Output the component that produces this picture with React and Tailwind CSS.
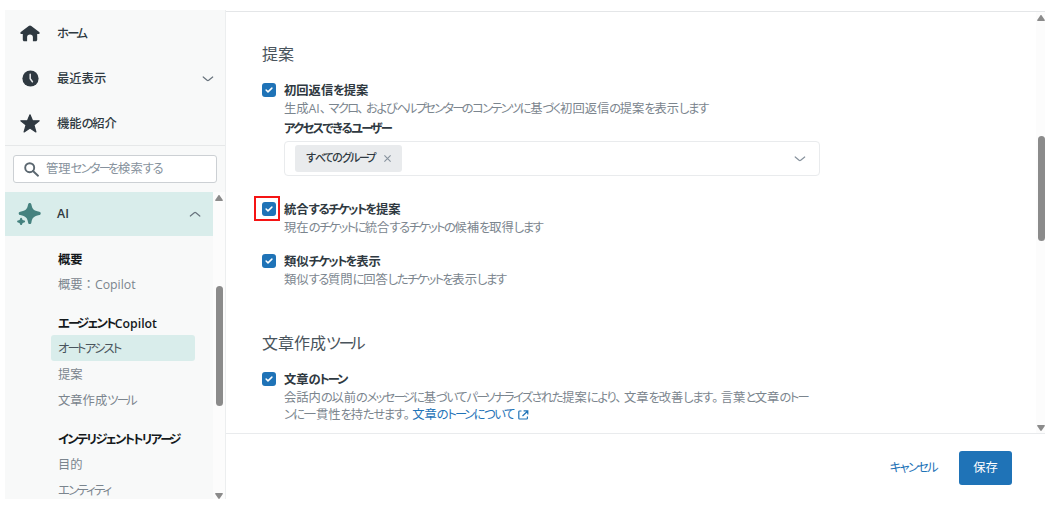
import clsx from 'clsx';

const NAV_GROUPS = [
  { title: '概要', items: [{ label: '概要：Copilot' }] },
  {
    title: 'エージェントCopilot',
    items: [{ label: 'オートアシスト', active: true }, { label: '提案' }, { label: '文章作成ツール' }],
  },
  { title: 'インテリジェントトリアージ', items: [{ label: '目的' }, { label: 'エンティティ' }] },
];

const RUNS = /[ーヘプべ]+|[ァ-ヶ]+?(?=[ーヘプべ]|[^ァ-ヶ]|$)|[ぁ-ん]+?(?=[べ]|[^ぁ-ん]|$)|[、。]|：|[^ァ-ヶーぁ-ん、。：]+/g;

const runClass = (run) => {
  if (/[ーヘプべ]/.test(run)) return 'tracking-[-0.24em]';
  if (/[ァ-ヶ]/.test(run)) return 'tracking-[-0.137em]';
  if (/[ぁ-ん]/.test(run)) return 'tracking-[-0.11em]';
  if (/[、。]/.test(run)) return 'tracking-[0.2em]';
  if (run === '：') return "[font-feature-settings:'palt'_0]";
  return '';
};

const Jp = ({ children }) => (
  <span>
    {children.match(RUNS).map((run, i) => {
      const cls = runClass(run);
      return cls ? <span key={i} className={cls}>{run}</span> : run;
    })}
  </span>
);

const HomeIcon = () => (
  <svg width="20" height="17" viewBox="0 0 20 17" fill="#2f3941">
    <path d="M10 .4c.5 0 .9.2 1.300.5l7.900 6.200c.9.8.4 2-.7 2h-1.300v5.600c0 .9-.6 1.500-1.500 1.500h-2.800v-4c0-1.500-1.100-2.600-2.900-2.600s-2.900 1.100-2.900 2.600v4H4.300c-.9 0-1.500-.6-1.500-1.500V9.100H1.500c-1.100 0-1.600-1.200-.7-2L8.700.9c.4-.3.8-.5 1.300-.5z" />
  </svg>
);

const ClockIcon = () => (
  <svg width="17" height="17" viewBox="0 0 17 17">
    <circle cx="8.500" cy="8.500" r="8.100" fill="#2f3941" />
    <path d="M8.200 4.200v4.600l2.200 3" fill="none" stroke="#e9ebed" strokeWidth="1.500" strokeLinecap="round" />
  </svg>
);

const StarIcon = () => (
  <svg width="20" height="19" viewBox="0 0 20 19" fill="#2f3941" stroke="#2f3941" strokeWidth="1.200" strokeLinejoin="round">
    <path d="M10 .8l2.500 6h6.700l-5.300 4.200 2 6.900L10 14.100l-5.900 3.800 2-6.900L.8 6.800h6.700z" />
  </svg>
);

const SparkleIcon = () => (
  <svg width="24" height="22" viewBox="0 0 24 22" fill="#45827f">
    <path d="M12.700 0c1 0 1.500.6 1.700 1.500.9 4.600 2.200 6.100 7.900 7.300.9.200 1.400.7 1.400 1.600s-.5 1.400-1.400 1.600c-5.700 1.200-7 2.700-7.900 7.400-.2 1-.7 1.500-1.700 1.500s-1.400-.5-1.600-1.500C10.200 14.700 8.900 13.200 3.200 12c-.9-.2-1.500-.7-1.500-1.600s.6-1.400 1.500-1.600c5.700-1.200 7-2.700 7.900-7.300.2-.9.600-1.500 1.600-1.500z" />
    <path d="M4.100 14.800c.6 0 .8.300.9.800.3 1.300.6 1.700 2.300 2 .5.100.8.400.8.900s-.3.800-.8.900c-1.700.3-2 .7-2.300 2-.1.400-.3.600-.9.600s-.8-.2-.9-.6c-.3-1.300-.6-1.700-2.300-2-.5-.1-.8-.4-.8-.9s.3-.8.800-.9c1.700-.3 2-.7 2.300-2 .1-.5.300-.8.900-.8z" />
  </svg>
);

const SearchIcon = () => (
  <svg width="15" height="15" viewBox="0 0 15 15" fill="none" stroke="#5b6770" strokeWidth="1.900">
    <circle cx="5.700" cy="5.700" r="4.500" />
    <path d="M9 9l5 4.700" strokeLinecap="round" />
  </svg>
);

const Chevron = ({ up, color = '#68737d' }) => (
  <svg width="12" height="6" viewBox="0 0 12 6" fill="none" stroke={color} strokeWidth="1.200" strokeLinecap="round" className={up ? 'rotate-180' : ''}>
    <path d="M1.200 1l3.900 3.200c.5.400 1.100.4 1.600 0L10.700 1" />
  </svg>
);

const ExternalIcon = () => (
  <svg width="11" height="10" viewBox="0 0 11 10" fill="none" stroke="#1f73b7" strokeWidth="1.200" className="ml-1">
    <path d="M3.500 1H1.600C1.100 1 .8 1.300.8 1.800v6.400c0 .5.300.8.800.8h7c.5 0 .8-.3.800-.8V6.500M5.600.9h4.200v3.600M9.500 1.200L4.500 6" />
  </svg>
);

const Arrow = ({ down }) => (
  <svg width="8" height="6" viewBox="0 0 8 6" fill="#8b8b8b" className={down ? 'rotate-180' : ''}>
    <path d="M3.300.5c.4-.6 1-.6 1.400 0L7.800 5c.2.500 0 .9-.5.900H.7C.2 5.900 0 5.500.2 5z" />
  </svg>
);

const Checkbox = ({ highlighted }) => (
  <span className="relative mt-px flex size-[14px] shrink-0 items-center justify-center rounded-[3px] bg-[#1f73b7]">
    <svg width="8" height="6" viewBox="0 0 8 6" fill="none" stroke="white" strokeWidth="1.500" strokeLinecap="round" strokeLinejoin="round">
      <path d="M1.100 3l1.900 1.900L6.900 1.100" />
    </svg>
    {highlighted && <span className="absolute -left-[8px] -top-[6px] h-[25px] w-[26px] border-2 border-[#f51414]" />}
  </span>
);

const TopLink = ({ icon, label, chevron }) => (
  <div className="flex h-[45px] items-center pl-[15px] pr-[11px]">
    <span className="flex w-5 justify-center">{icon}</span>
    <span className="ml-[17px] flex-1 pt-px font-medium text-[#2f3941]"><Jp>{label}</Jp></span>
    {chevron && <Chevron />}
  </div>
);

const Option = ({ label, highlighted, children }) => (
  <div className="flex gap-2">
    <Checkbox highlighted={highlighted} />
    <div className="flex-1">
      <div className="h-[18px] leading-[17px] font-semibold text-[#2f3941]"><Jp>{label}</Jp></div>
      {children}
    </div>
  </div>
);

const Desc = ({ children }) => (
  <div className="flex h-[17px] items-center leading-[17px] text-[#7b858e]">{children}</div>
);

const Sidebar = () => (
  <aside className="flex w-[221px] shrink-0 flex-col border-r border-[#eceeef] bg-[#f8f9f9]">
    <div className="h-[136px] border-b border-[#e6e8e9] pt-px">
      <TopLink icon={<HomeIcon />} label="ホーム" />
      <TopLink icon={<ClockIcon />} label="最近表示" chevron />
      <TopLink icon={<StarIcon />} label="機能の紹介" />
    </div>
    <div className="mx-2 mt-[9px] flex h-[28px] w-[204px] items-center rounded-[3px] border border-[#ccd0d4] bg-white pl-[10px]">
      <SearchIcon />
      <span className="ml-[7px] pt-px text-[#87929d]"><Jp>管理センターを検索する</Jp></span>
    </div>
    <div className="mt-[9px] flex min-h-0 flex-1">
      <div className="w-[208px]">
        <div className="flex h-11 items-center bg-[#d9edeb] pl-[12px] pr-3">
          <SparkleIcon />
          <span className="ml-[16px] flex-1 pt-px font-semibold text-[#2f3941]">AI</span>
          <Chevron up />
        </div>
        <div className="flex flex-col gap-[13px] pl-[46px] pt-[10px]">
          {NAV_GROUPS.map((group) => (
            <div key={group.title}>
              <div className="h-[25px] pl-[7px] leading-[28px] font-semibold text-[#15191c]"><Jp>{group.title}</Jp></div>
              {group.items.map((item) => (
                <div
                  key={item.label}
                  className={clsx('h-[26px] w-[144px] rounded-[3px] pl-[7px] leading-[28px]', item.active ? 'bg-[#d9edeb] text-[#49545c]' : 'text-[#7b858e]')}
                >
                  <Jp>{item.label}</Jp>
                </div>
              ))}
            </div>
          ))}
        </div>
      </div>
      <div className="flex w-3 flex-col items-center bg-[#fcfcfc] pt-[3px]">
        <Arrow />
        <div className="ml-px mt-[85px] h-[120px] w-[7px] rounded-full bg-[#8b8b8b]" />
        <div className="mt-auto"><Arrow down /></div>
      </div>
    </div>
  </aside>
);

const App = () => (
  <div className="h-[509px] w-[1059px] overflow-hidden bg-white pl-[5px] pt-[10px] font-['Open_Sans','Noto_Sans_CJK_JP',sans-serif] text-[12.3px] whitespace-nowrap [font-feature-settings:'palt']">
    <div className="flex h-[489px] overflow-hidden">
      <Sidebar />
      <main className="mt-px flex w-[819px] flex-col border-t border-[#e4e6e8]">
        <div className="flex h-[421px]">
          <div className="w-[810px] pl-9 pt-8">
            <h2 className="h-5 text-[16px] leading-5 text-[#49545c]"><Jp>提案</Jp></h2>
            <div className="mt-[18px]">
              <Option label="初回返信を提案">
                <Desc><Jp>生成AI、マクロ、およびヘルプセンターのコンテンツに基づく初回返信の提案を表示します</Jp></Desc>
                <div className="mt-[3px] h-[17px] leading-[17px] font-semibold text-[#2f3941]"><Jp>アクセスできるユーザー</Jp></div>
                <div className="mt-1 flex h-[35px] w-[536px] items-center rounded-[4px] border border-[#e9ebed] pl-[10px] pr-[13px]">
                  <span className="flex h-[27px] w-[107px] items-center rounded-[3px] bg-[#e9ebed] pl-[11px] text-[11px] font-medium text-[#2f3941]">
                    <Jp>すべてのグループ</Jp>
                    <svg width="7" height="7" viewBox="0 0 7 7" stroke="#87929d" strokeWidth="1.100" className="ml-auto mr-[11px] shrink-0">
                      <path d="M.4.4l6.200 6.200M6.600.4L.4 6.600" />
                    </svg>
                  </span>
                  <span className="ml-auto"><Chevron color="#87929d" /></span>
                </div>
              </Option>
            </div>
            <div className="mt-[25px]">
              <Option label="統合するチケットを提案" highlighted>
                <Desc><Jp>現在のチケットに統合するチケットの候補を取得します</Jp></Desc>
              </Option>
            </div>
            <div className="mt-[17px]">
              <Option label="類似チケットを表示">
                <Desc><Jp>類似する質問に回答したチケットを表示します</Jp></Desc>
              </Option>
            </div>
            <h2 className="mt-[45px] h-5 text-[16px] leading-5 text-[#49545c]"><Jp>文章作成ツール</Jp></h2>
            <div className="mt-[18px]">
              <Option label="文章のトーン">
                <Desc><Jp>会話内の以前のメッセージに基づいてパーソナライズされた提案により、文章を改善します。言葉と文章のトー</Jp></Desc>
                <Desc>
                  <Jp>ンに一貫性を持たせます。</Jp>
                  <a className="text-[#1f73b7]"><Jp>文章のトーンについて</Jp></a>
                  <ExternalIcon />
                </Desc>
              </Option>
            </div>
          </div>
          <div className="flex w-[9px] flex-col items-end bg-[#fcfcfc] pt-[3px] pb-[2px]">
            <Arrow />
            <div className="mt-[115px] h-[105px] w-[7px] rounded-full bg-[#8b8b8b]" />
            <div className="mt-auto"><Arrow down /></div>
          </div>
        </div>
        <footer className="flex flex-1 items-center justify-end border-t border-[#e9ebed] pr-[33px] pt-[3px]">
          <button className="pt-px text-[#1f73b7]"><Jp>キャンセル</Jp></button>
          <button className="ml-[22px] h-[34px] w-[53px] rounded-[3px] bg-[#1f73b7] pt-px text-white"><Jp>保存</Jp></button>
        </footer>
      </main>
    </div>
  </div>
);

export default App;
